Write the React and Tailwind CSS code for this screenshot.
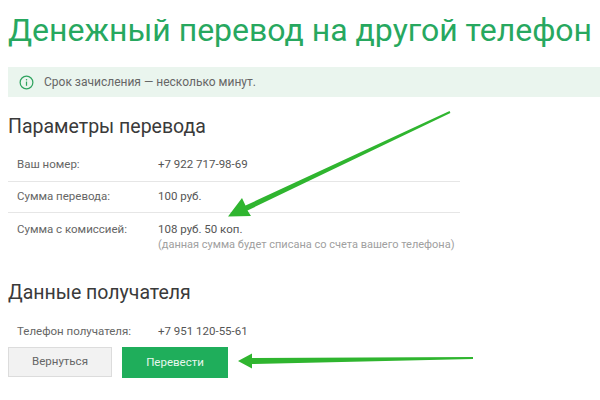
import React from 'react';

const font = { fontFamily: 'Roboto, "Liberation Sans", Arial, sans-serif' };

const Arrows = () => (
  <svg className="absolute inset-0 pointer-events-none" width="600" height="400" viewBox="0 0 600 400">
    <polygon
      fill="#2fb52f"
      points="449.6,111.1 245.5,205.5 242,198 228,216.5 251,216 247.5,210.5 450.4,112.9"
    />
    <polygon
      fill="#2fb52f"
      points="473,357 252,358 252,353.5 238,361 252,368.5 252,364 473,359"
    />
  </svg>
);

export default function App() {
  return (
    <div className="relative w-[600px] h-[400px] bg-white overflow-hidden" style={font}>
      <div className="px-2 pt-2">
        <h1 className="text-[32px] leading-[44px] text-[#27a85f] whitespace-nowrap">
          Денежный перевод на другой телефон
        </h1>

        <div className="mt-[15px] h-[30px] -mr-2 bg-[#eaf5ee] flex items-center pl-[11px] gap-[10px] text-[12px] text-[#666]">
          <svg width="15" height="15" viewBox="0 0 16 16">
            <circle cx="8" cy="8" r="6.8" fill="none" stroke="#2ea35e" strokeWidth="1.3" />
            <rect x="7.35" y="7" width="1.3" height="4.5" fill="#2ea35e" />
            <circle cx="8" cy="5" r="0.8" fill="#2ea35e" />
          </svg>
          <span>Срок зачисления — несколько минут.</span>
        </div>

        <h2 className="mt-[16px] text-[19.5px] leading-[28px] text-[#3a3a3a]">Параметры перевода</h2>

        <div className="mt-2 w-[452px] text-[11.5px]">
          <div className="h-[33px] flex items-center pl-[9px] border-b border-[#e6e6e6]">
            <div className="w-[141px] shrink-0 text-[#666]">Ваш номер:</div>
            <div className="text-[#555]">+7 922 717-98-69</div>
          </div>
          <div className="h-[31px] flex items-center pl-[9px] border-b border-[#e6e6e6]">
            <div className="w-[141px] shrink-0 text-[#666]">Сумма перевода:</div>
            <div className="text-[#555]">100 руб.</div>
          </div>
          <div className="flex pl-[9px] pt-2 leading-[16px]">
            <div className="w-[141px] shrink-0 text-[#666]">Сумма с комиссией:</div>
            <div>
              <div className="text-[#555]">108 руб. 50 коп.</div>
              <div className="text-[11px] text-[#a0a0a0] whitespace-nowrap">(данная сумма будет списана со счета вашего телефона)</div>
            </div>
          </div>
        </div>

        <h2 className="mt-[26px] text-[19.5px] leading-[28px] text-[#3a3a3a]">Данные получателя</h2>

        <div className="mt-4 flex pl-[9px] text-[11.5px] leading-[16px]">
          <div className="w-[141px] shrink-0 text-[#666]">Телефон получателя:</div>
          <div className="text-[#555]">+7 951 120-55-61</div>
        </div>

        <div className="mt-2 flex gap-[10px]">
          <button className="w-[104px] h-[30px] bg-[#f2f2f2] border border-[#dcdcdc] text-[11.5px] text-[#666]">
            Вернуться
          </button>
          <button className="w-[106px] h-[31px] bg-[#1fae5b] text-[11.5px] text-[#e8f7ee]">
            Перевести
          </button>
        </div>
      </div>
      <Arrows />
    </div>
  );
}
